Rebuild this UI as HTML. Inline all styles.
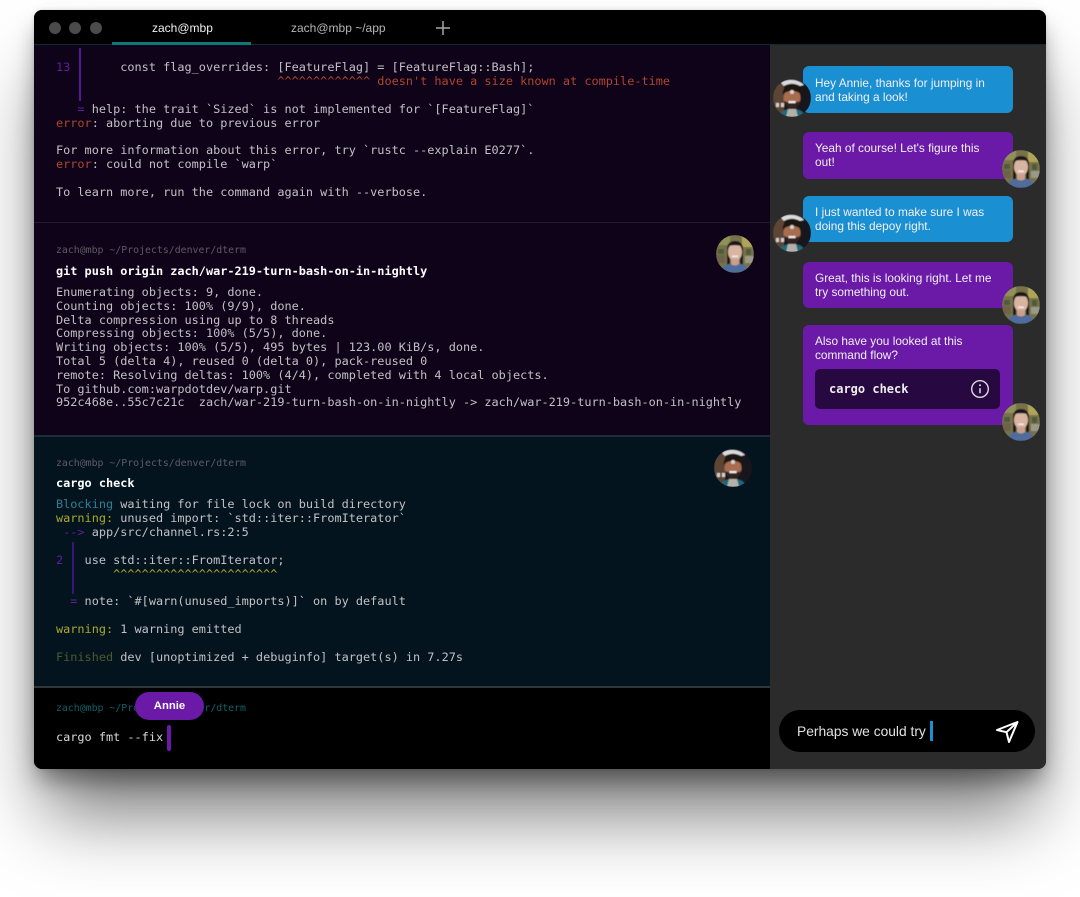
<!DOCTYPE html>
<html><head><meta charset="utf-8"><style>
html,body{margin:0;padding:0;background:#fff;width:1080px;height:897px;overflow:hidden}
#win{position:absolute;left:34px;top:10px;width:1012px;height:759px;border-radius:8px;box-shadow:0 55px 70px -10px rgba(0,0,0,.52),0 14px 24px -4px rgba(0,0,0,.4),0 0 5px rgba(0,0,0,.12)}
.r{position:absolute}
#clip{position:absolute;left:34px;top:10px;width:1012px;height:759px;border-radius:8px;overflow:hidden;background:#000}
#stage{position:absolute;left:-34px;top:-10px;width:1080px;height:897px}
.l{position:absolute;left:56px;height:14px;font:11.87px/14px "DejaVu Sans Mono","Liberation Mono",monospace;color:#c2c0c4;white-space:pre}
.p{color:#5f5a64;font-size:9.87px}
.b{font-weight:bold;color:#fff}
.pu{color:#5f1ea0}.er{color:#b0452f}.ye{color:#aca82e}.cy{color:#2f7f96}.gr{color:#4c5a2a}
.s{position:absolute;font:11.85px/14px "Liberation Sans",Arial,sans-serif;white-space:pre;color:#f1f1f4}
.bub{position:absolute;left:803px;width:210px;border-radius:6px}
.blue{background:#1a8fd1}.purple{background:#6a1aa6}
.dot{position:absolute;top:22px;width:12px;height:12px;border-radius:50%;background:#4b4b4b}
</style></head><body>
<div id="win"></div>
<div id="clip"><div id="stage">
<div class="r" style="left:34px;top:45px;width:736px;height:391px;background:#0f0319"></div>
<div class="r" style="left:34px;top:222px;width:736px;height:1px;background:#221830"></div>
<div class="r" style="left:34px;top:435px;width:736px;height:2px;background:#1c2c3a"></div>
<div class="r" style="left:34px;top:437px;width:736px;height:249px;background:#04141f"></div>
<div class="r" style="left:34px;top:686px;width:736px;height:2px;background:#33363b"></div>
<div class="r" style="left:34px;top:688px;width:736px;height:81px;background:#000"></div>
<div class="r" style="left:770px;top:45px;width:276px;height:724px;background:#2b2b2b"></div>
<div class="r" style="left:34px;top:10px;width:1012px;height:35px;background:#000"></div>
<div class="r" style="left:34px;top:44px;width:1012px;height:1px;background:#0d2b30"></div>
<div class="r" style="left:112px;top:42px;width:139px;height:3px;background:#0e7a78"></div>
<div class="dot" style="left:49px"></div><div class="dot" style="left:69px"></div><div class="dot" style="left:90px"></div>
<div class="s" style="left:152px;top:21px;font-size:12px;color:#f0f0f0">zach@mbp</div>
<div class="s" style="left:291px;top:21px;font-size:12px;color:#b5b5b5">zach@mbp ~/app</div>
<svg class="r" style="left:435px;top:20px" width="16" height="16"><path d="M8 1v14M1 8h14" stroke="#a9a9a9" stroke-width="1.5"/></svg>

<div class="r" style="left:79px;top:48px;width:2px;height:53px;background:#4f1a90"></div>
<div class="l" style="top:60px"><span class="pu">13</span>       const flag_overrides: [FeatureFlag] = [FeatureFlag::Bash];</div>
<div class="l" style="top:74px"><span class="er">                               ^^^^^^^^^^^^^ doesn't have a size known at compile-time</span></div>
<div class="l" style="top:102px"><span class="pu">   =</span> help: the trait `Sized` is not implemented for `[FeatureFlag]`</div>
<div class="l" style="top:116px"><span class="er">error</span>: aborting due to previous error</div>
<div class="l" style="top:143px">For more information about this error, try `rustc --explain E0277`.</div>
<div class="l" style="top:157px"><span class="er">error</span>: could not compile `warp`</div>
<div class="l" style="top:185px">To learn more, run the command again with --verbose.</div>

<div class="l p" style="top:244px">zach@mbp ~/Projects/denver/dterm</div>
<div class="l b" style="top:264px">git push origin zach/war-219-turn-bash-on-in-nightly</div>
<div class="l" style="top:285px">Enumerating objects: 9, done.</div>
<div class="l" style="top:299px">Counting objects: 100% (9/9), done.</div>
<div class="l" style="top:313px">Delta compression using up to 8 threads</div>
<div class="l" style="top:326px">Compressing objects: 100% (5/5), done.</div>
<div class="l" style="top:340px">Writing objects: 100% (5/5), 495 bytes | 123.00 KiB/s, done.</div>
<div class="l" style="top:354px">Total 5 (delta 4), reused 0 (delta 0), pack-reused 0</div>
<div class="l" style="top:368px">remote: Resolving deltas: 100% (4/4), completed with 4 local objects.</div>
<div class="l" style="top:382px">To github.com:warpdotdev/warp.git</div>
<div class="l" style="top:395px">952c468e..55c7c21c  zach/war-219-turn-bash-on-in-nightly -&gt; zach/war-219-turn-bash-on-in-nightly</div>

<div class="l p" style="top:457px">zach@mbp ~/Projects/denver/dterm</div>
<div class="l b" style="top:476px">cargo check</div>
<div class="l" style="top:497px"><span class="cy">Blocking</span> waiting for file lock on build directory</div>
<div class="l" style="top:511px"><span class="ye">warning:</span> unused import: `std::iter::FromIterator`</div>
<div class="l" style="top:525px"><span class="pu"> --&gt;</span> app/src/channel.rs:2:5</div>
<div class="r" style="left:72px;top:542px;width:2px;height:52px;background:#35197a"></div>
<div class="l" style="top:553px"><span class="pu">2</span>   use std::iter::FromIterator;</div>
<div class="l" style="top:567px"><span class="ye">        ^^^^^^^^^^^^^^^^^^^^^^^</span></div>
<div class="l" style="top:594px"><span class="pu">  =</span> note: `#[warn(unused_imports)]` on by default</div>
<div class="l" style="top:622px"><span class="ye">warning:</span> 1 warning emitted</div>
<div class="l" style="top:650px"><span class="gr">Finished</span> dev [unoptimized + debuginfo] target(s) in 7.27s</div>

<div class="l p" style="top:702px;color:#11606c">zach@mbp ~/Projects/denver/dterm</div>
<div class="l" style="top:730px;color:#d8d8d8">cargo fmt --fix</div>
<div class="r" style="left:167px;top:725px;width:4px;height:26px;border-radius:2px;background:#6a1aa6"></div>
<div class="r" style="left:135px;top:692px;width:69px;height:28px;border-radius:14px;background:#6a1aa6"></div>
<div class="s" style="left:135px;top:699px;width:69px;text-align:center;font-weight:bold;font-size:11.3px;color:#fff">Annie</div>

<div class="bub blue" style="top:66px;height:47px"></div>
<div class="s" style="left:815px;top:76px">Hey Annie, thanks for jumping in
and taking a look!</div>
<div class="bub purple" style="top:132px;height:47px"></div>
<div class="s" style="left:815px;top:141px">Yeah of course! Let's figure this
out!</div>
<div class="bub blue" style="top:196px;height:46px"></div>
<div class="s" style="left:815px;top:205px">I just wanted to make sure I was
doing this depoy right.</div>
<div class="bub purple" style="top:262px;height:46px"></div>
<div class="s" style="left:815px;top:271px">Great, this is looking right. Let me
try something out.</div>
<div class="bub purple" style="top:325px;height:100px"></div>
<div class="s" style="left:815px;top:334px">Also have you looked at this
command flow?</div>
<div class="r" style="left:815px;top:369px;width:185px;height:40px;border-radius:5px;background:#280840"></div>
<div class="l" style="left:829px;top:382px;font-size:12px;font-weight:bold;color:#eee">cargo check</div>
<svg class="r" style="left:970px;top:379px" width="20" height="20"><circle cx="10" cy="10" r="8.3" fill="none" stroke="#ddd" stroke-width="1.4"/><path d="M10 9.2v5" stroke="#ddd" stroke-width="1.5"/><circle cx="10" cy="6.3" r="1" fill="#ddd"/></svg>

<svg width="0" height="0" style="position:absolute"><defs>
<clipPath id="c"><circle cx="19" cy="19" r="19"/></clipPath>
<filter id="bl"><feGaussianBlur stdDeviation="0.6"/></filter>
<g id="man"><g clip-path="url(#c)"><g filter="url(#bl)"><rect width="38" height="38" fill="#17171b"/><path d="M0 5h11v33H0z" fill="#5c4436"/><path d="M8 4C12 0 24-1 31 6l-4 1c-5-3-11-3-16 0z" fill="#dcdadc"/><path d="M3 24h3v4H3zM8 24h3v4H8z" fill="#d6d0ca"/><path d="M6 38c1-6 6-8 13-8s12 2 13 8z" fill="#1d6a7c"/><path d="M13 38l2-8h8l2 8z" fill="#b4b0ac"/><ellipse cx="19" cy="19" rx="8.5" ry="10.5" fill="#a86c50"/><path d="M10 16c-1-7 4-10 9-10s10 3 9 10c-2-3-5-4-9-4s-7 1-9 4z" fill="#1a1310"/><path d="M11 22c1 6 5 8 8 8s7-2 8-8c-2 2-14 2-16 0z" fill="#33211a"/><rect x="15.5" y="22" width="7" height="2.2" fill="#eee"/><circle cx="19" cy="13" r="2" fill="#d8d4d4"/></g></g></g>
<g id="wom"><g clip-path="url(#c)"><g filter="url(#bl)"><rect width="38" height="38" fill="#77724a"/><path d="M0 0h14v10H0z" fill="#8f9258"/><path d="M26 0h12v12H26z" fill="#b0a45a"/><path d="M2 14h6v5H2zM30 14h5v6h-5z" fill="#4f5a3a"/><path d="M0 20h9v8H0z" fill="#6e6348"/><path d="M29 21h9v7h-9z" fill="#9a9a88"/><path d="M11 30V14c0-6 4-8 8-8s8 2 8 8v16h-3V15H14v15z" fill="#1d1714"/><path d="M5 38c1-6 5-9 8-9h12c3 0 7 3 8 9z" fill="#4f6c9a"/><ellipse cx="19" cy="17" rx="7" ry="9" fill="#d8b4a2"/><path d="M13 11c1-3 4-4 6-4s5 1 6 4c-3-1-9-1-12 0z" fill="#1d1714"/><rect x="16" y="20.5" width="6" height="1.6" fill="#f3ebe6"/><path d="M15 24h8v5c-2 2-6 2-8 0z" fill="#c9a08c"/></g></g></g>
</defs></svg>
<svg class="r" style="left:716px;top:235px" width="38" height="38"><use href="#wom"/></svg>
<svg class="r" style="left:714px;top:449px" width="38" height="38"><use href="#man"/></svg>
<svg class="r" style="left:773px;top:79px" width="38" height="38"><use href="#man"/></svg>
<svg class="r" style="left:1002px;top:150px" width="38" height="38"><use href="#wom"/></svg>
<svg class="r" style="left:773px;top:214px" width="38" height="38"><use href="#man"/></svg>
<svg class="r" style="left:1002px;top:286px" width="38" height="38"><use href="#wom"/></svg>
<svg class="r" style="left:1002px;top:403px" width="38" height="38"><use href="#wom"/></svg>

<div class="r" style="left:779px;top:710px;width:256px;height:42px;border-radius:21px;background:#000"></div>
<div class="s" style="left:797px;top:724px;font-size:13.8px;line-height:16px;color:#e2e2e2">Perhaps we could try</div>
<div class="r" style="left:930px;top:721px;width:3px;height:20px;background:#1a8fd1"></div>
<svg class="r" style="left:990px;top:716px" width="34" height="32"><path d="M27.5 6L7 14l9.5 2.2L19 26zM27.5 6L16.5 16.2" fill="none" stroke="#fff" stroke-width="2" stroke-linejoin="round" stroke-linecap="round"/></svg>
</div></div>
</body></html>
